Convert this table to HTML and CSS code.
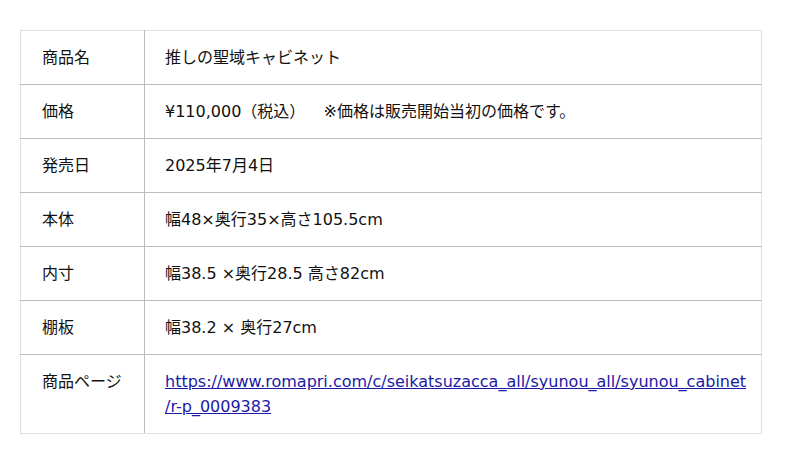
FILE: index.html
```html
<!DOCTYPE html>
<html lang="ja">
<head>
<meta charset="utf-8">
<link rel="stylesheet" href="styles.css">
</head>
<body>
<table class="spec">
  <tbody>
    <tr><th>商品名</th><td>推しの聖域キャビネット</td></tr>
    <tr><th>価格</th><td>¥110,000（税込）　&nbsp; ※価格は販売開始当初の価格です。</td></tr>
    <tr><th>発売日</th><td>2025年7月4日</td></tr>
    <tr><th>本体</th><td>幅48×奥行35×高さ105.5cm</td></tr>
    <tr><th>内寸</th><td>幅38.5 ×奥行28.5 高さ82cm</td></tr>
    <tr><th>棚板</th><td>幅38.2 × 奥行27cm</td></tr>
    <tr><th>商品ページ</th><td><a class="link" href="#">https://www.romapri.com/c/seikatsuzacca_all/syunou_all/syunou_cabinet/r-p_0009383</a></td></tr>
  </tbody>
</table>
</body>
</html>
```
FILE: styles.css
```css
html, body {
  margin: 0;
  padding: 0;
  background: #fff;
}
body {
  padding: 30px 38px 0 20px;
  font-family: "DejaVu Sans", "Noto Sans CJK JP", sans-serif;
  font-size: 16px;
  color: #111;
}
.spec {
  width: 742px;
  border-collapse: collapse;
  border: 1px solid #e0e0e0;
  table-layout: fixed;
}
.spec th, .spec td {
  text-align: left;
  vertical-align: top;
  font-weight: normal;
  line-height: 25px;
  padding: 14px 10px 14px 21px;
  border-top: 1px solid #bcbcbc;
  border-bottom: 1px solid #bcbcbc;
}
.spec tr:first-child th, .spec tr:first-child td { border-top-color: #e0e0e0; }
.spec tr:last-child th, .spec tr:last-child td { border-bottom-color: #e0e0e0; }
.spec th {
  width: 124px;
  box-sizing: border-box;
  border-right: 1px solid #bcbcbc;
  padding-left: 21px;
}
.spec td { padding-left: 20px; padding-right: 12px; }
.link {
  color: #1a1aa6;
  overflow-wrap: anywhere;
}
```
